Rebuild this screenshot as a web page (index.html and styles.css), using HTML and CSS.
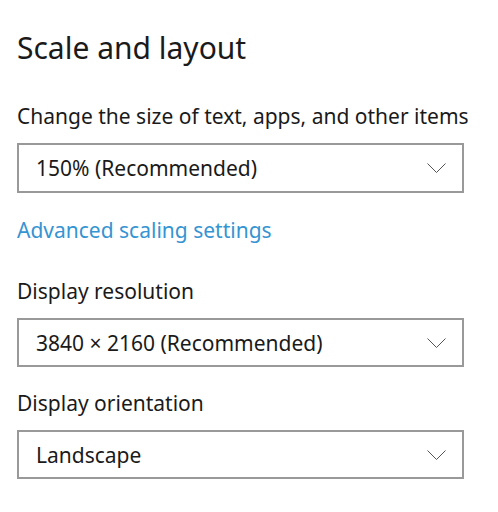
FILE: index.html
```html
<!DOCTYPE html>
<html>
<head>
<meta charset="utf-8">
<link rel="stylesheet" href="styles.css">
</head>
<body>
<main class="page">
  <h1 class="title">Scale and layout</h1>
  <section class="group">
    <div class="label">Change the size of text, apps, and other items</div>
    <div class="select"><span class="value">150% (Recommended)</span><svg class="chev" width="19" height="10" viewBox="0 0 19 10"><path d="M0.5 0.5 L9.5 9.5 L18.5 0.5" fill="none" stroke="#555" stroke-width="1"/></svg></div>
  </section>
  <a class="link" href="#">Advanced scaling settings</a>
  <section class="group res">
    <div class="label">Display resolution</div>
    <div class="select"><span class="value">3840 × 2160 (Recommended)</span><svg class="chev" width="19" height="10" viewBox="0 0 19 10"><path d="M0.5 0.5 L9.5 9.5 L18.5 0.5" fill="none" stroke="#555" stroke-width="1"/></svg></div>
  </section>
  <section class="group orient">
    <div class="label">Display orientation</div>
    <div class="select"><span class="value">Landscape</span><svg class="chev" width="19" height="10" viewBox="0 0 19 10"><path d="M0.5 0.5 L9.5 9.5 L18.5 0.5" fill="none" stroke="#555" stroke-width="1"/></svg></div>
  </section>
</main>
</body>
</html>
```
FILE: styles.css
```css
* { box-sizing: border-box; }
html, body { margin: 0; padding: 0; background: #fff; }
body { font-family: "Noto Sans", "Open Sans", sans-serif; color: #1a1a1a; }
.page { padding: 26px 0 0 17px; width: 464px; display: flex; flex-direction: column; }
.title { font-size: 30px; font-weight: 400; margin: 0; line-height: 44px; }
.group { display: flex; flex-direction: column; }
.label { font-size: 21px; line-height: 28px; margin-top: 32px; white-space: nowrap; }
.select { margin-top: 13px; height: 50px; border: 2px solid #999; display: flex; align-items: center; justify-content: space-between; padding: 0 16px 0 17px; }
.value { font-size: 21px; white-space: nowrap; }
.chev { display: block; }
.link { font-size: 21px; line-height: 28px; color: #3594d2; text-decoration: none; margin-top: 23px; align-self: flex-start; }
.res .label { margin-top: 33px; }
.res .select { height: 49px; }
.orient .label { margin-top: 22px; }
.orient .select { height: 49px; }
```
